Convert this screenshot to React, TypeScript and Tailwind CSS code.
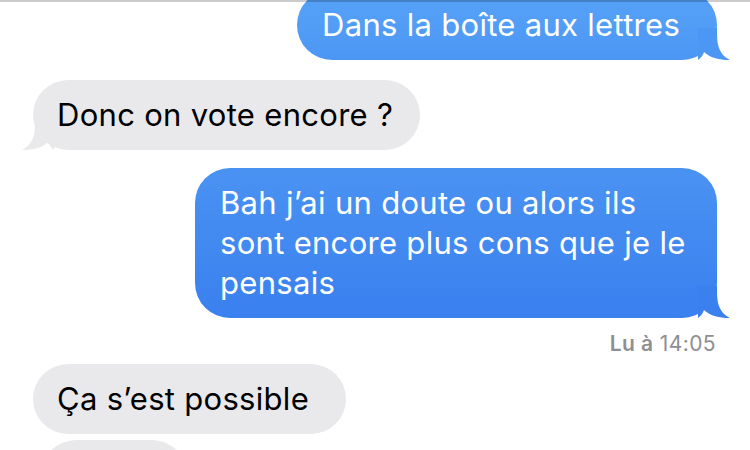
/*
  Conversation — iMessage-style thread, cropped mid-scroll.
  Blue bubbles on the right (sent), gray on the left (received),
  read receipt under the last sent message.
*/
import React from "react";

const font = { fontFamily: "Inter, 'Liberation Sans', sans-serif" };

/* Tail drawn at a bubble's bottom corner; mirrored for received bubbles */
function Tail({ side, color }: { side: "left" | "right"; color: string }) {
  return (
    <svg
      className={`absolute bottom-0 w-[32px] h-[32px] ${side === "right" ? "-right-[13px]" : "-left-[11px] -scale-x-100"}`}
      viewBox="0 0 32 32"
    >
      <path
        d="M0 0 L19 0 L19 6 C19 18 22 27 31 31.5 Q32 32 30.5 32 C22 32 12 30 6 24 C5 27 3 30 0 32 Z"
        fill={color}
      />
    </svg>
  );
}

function Sent({ lines, width, grad, tailColor }: {
  lines: string[];
  width: string;
  grad: string;
  tailColor: string;
}) {
  return (
    <div className="flex justify-end">
      <div className={`relative ${width} rounded-[35px] ${grad} text-white px-[25px] py-[15px] text-[31px] leading-[40px] tracking-[0.3px]`}>
        {lines.map((l) => (
          <div key={l} className="relative z-10 whitespace-nowrap">{l}</div>
        ))}
        <Tail side="right" color={tailColor} />
      </div>
    </div>
  );
}

function Received({ text, width, tail = true }: { text: string; width: string; tail?: boolean }) {
  return (
    <div className="flex justify-start">
      <div className={`relative ${width} rounded-[35px] bg-[#e9e9eb] text-black px-[24px] py-[15px] text-[31px] leading-[40px] tracking-[0.3px]`}>
        <div className="relative z-10 whitespace-nowrap">{text}</div>
        {tail && <Tail side="left" color="#e9e9eb" />}
      </div>
    </div>
  );
}

export default function App() {
  return (
    <div className="relative w-[750px] h-[450px] overflow-hidden bg-white" style={font}>
      {/* Top hairline of the screen edge */}
      <div className="absolute top-0 left-0 right-0 h-[2px] bg-black/20 z-20" />

      <div className="flex flex-col px-[33px] -mt-[10px]">
        <Sent
          lines={["Dans la boîte aux lettres"]}
          width="w-[420px]"
          grad="bg-gradient-to-b from-[#57a2f8] to-[#4c97f3]"
          tailColor="#4c97f3"
        />

        <div className="mt-[20px]">
          <Received text="Donc on vote encore ?" width="w-[387px]" />
        </div>

        <div className="mt-[18px]">
          <Sent
            lines={["Bah j’ai un doute ou alors ils", "sont encore plus cons que je le", "pensais"]}
            width="w-[522px]"
            grad="bg-gradient-to-b from-[#4a92f2] to-[#3a80ef]"
            tailColor="#3a80ef"
          />
        </div>

        <div className="mt-[13px] text-right text-[21px] leading-[26px] tracking-[0.4px] text-[#8e8e93] pr-[1px]">
          <span className="font-semibold">Lu à</span> 14:05
        </div>

        <div className="mt-[7px]">
          <Received text="Ça s’est possible" width="w-[313px]" tail={false} />
        </div>

        <div className="mt-[6px] pl-[8px]">
          <div className="w-[146px] h-[70px] rounded-[35px] bg-[#e9e9eb]" />
        </div>
      </div>
    </div>
  );
}
